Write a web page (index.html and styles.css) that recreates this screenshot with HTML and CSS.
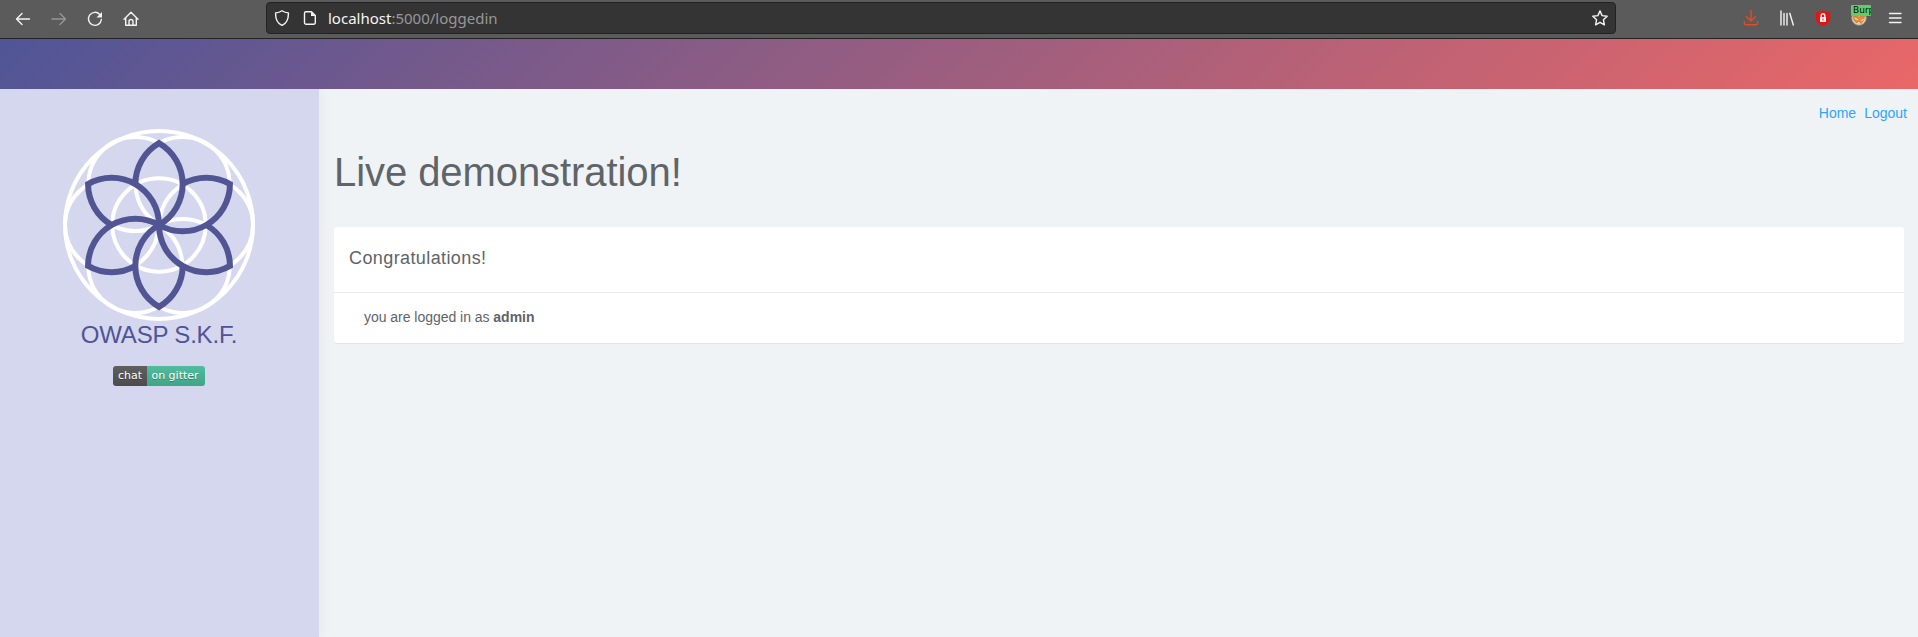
FILE: index.html
```html
<!DOCTYPE html>
<html lang="en">
<head>
<meta charset="utf-8">
<title>OWASP S.K.F.</title>
<link rel="stylesheet" href="styles.css">
</head>
<body>
<div class="toolbar">
  <div class="nav">
    <svg class="ico" viewBox="0 0 16 16"><path d="M14.500 8H1.500M7 2.500L1.500 8 7 13.500"/></svg>
    <svg class="ico off" viewBox="0 0 16 16"><path d="M1 8h13.500M9 2.500L14.500 8 9 13.500"/></svg>
    <svg class="ico" viewBox="0 0 16 16"><path d="M12.800 3.500A6.500 6.500 0 1 0 14.400 8.500"/><path class="solid" d="M15 1v5.500H9.500z"/></svg>
    <svg class="ico" viewBox="0 0 16 16"><path d="M1 8.200L8 1.300l7 6.900M2.700 7v7.300h10.600V7M6 14v-3.500a2 2 0 0 1 4 0V14"/></svg>
  </div>
  <div class="url">
    <svg class="ico" viewBox="0 0 16 16"><path d="M8 .8c2 1.400 4.200 2 6.400 2.100C14.600 9 12.500 13.500 8 15.400 3.500 13.500 1.400 9 1.600 2.900 3.800 2.800 6 2.200 8 .8z"/></svg>
    <svg class="ico page" viewBox="0 0 16 16"><path d="M4 1.700h5.500L13.300 5.500v7.300a1.500 1.500 0 0 1-1.500 1.500H4a1.500 1.500 0 0 1-1.500-1.500V3.200A1.500 1.500 0 0 1 4 1.700z"/><path class="solid" d="M9 1.700v4.300h4.500z"/></svg>
    <div class="address">localhost<span>:5000/loggedin</span></div>
    <svg class="ico" viewBox="0 0 16 16"><path d="M8 .9l2.100 4.700 5.100.6-3.800 3.500 1 5.100L8 12.300l-4.400 2.500 1-5.100L.8 6.200l5.100-.6z"/></svg>
  </div>
  <div class="tools">
    <svg class="ico down" viewBox="0 0 16 16"><path d="M8 .5v10.500M3.500 6.700L8 11l4.500-4.300M1.300 11.500v1.300a1.900 1.900 0 0 0 1.900 1.900h9.600a1.900 1.900 0 0 0 1.900-1.900v-1.300"/></svg>
    <svg class="ico" viewBox="0 0 16 16"><path d="M2 1v14M5 3.500V15M8 3.500V15M10.800 3.300L14.300 15"/></svg>
    <svg class="ico" viewBox="0 0 16 16"><path class="red" d="M8 0c2 1.400 4.500 2.100 7.200 2.200v6c0 3.700-3 6.300-7.200 7.800C3.800 14.500.8 11.900.8 8.200v-6C3.500 2.100 6 1.400 8 0z"/><path class="solid" d="M5 7h6v5H5z"/><path d="M6.200 7V5.500a1.800 1.800 0 0 1 3.600 0V7"/><path class="red" d="M7.500 8.500h1v2h-1z"/></svg>
    <div class="proxy">
      <svg class="ico" viewBox="0 0 16 16"><circle class="rim" cx="8" cy="8" r="7.300"/><path class="fox" d="M2.500 5.500L8 7l5.500-1.500-.8 4.500L10 13.500 8 11l-2.500 2L3 10z"/><path class="tail" d="M4 8.500l2.500 1M12.500 9l-2 2"/></svg>
      <span class="tag">Burp</span>
    </div>
    <svg class="ico" viewBox="0 0 16 16"><path d="M2.500 3.500h11.500M2.500 8h11.500M2.500 12.500h11.500"/></svg>
  </div>
</div>
<div class="banner"></div>
<div class="layout">
  <aside class="sidebar">
    <svg class="logo" viewBox="-96 -96 192 192">
      <defs><path id="petal" d="M0 0A47.300 47.300 0 0 0 0 -81.930A47.300 47.300 0 0 0 -23.650 -40.960"/></defs>
      <g class="rings">
        <circle r="94"/><circle r="46.700"/>
        <circle cx="47.300" r="46.700"/><circle cx="-47.300" r="46.700"/>
        <circle cx="23.650" cy="-40.960" r="47"/><circle cx="-23.650" cy="-40.960" r="47"/>
        <circle cx="23.650" cy="40.960" r="47"/><circle cx="-23.650" cy="40.960" r="47"/>
      </g>
      <g class="petals">
        <use href="#petal"/><use href="#petal" transform="rotate(60)"/><use href="#petal" transform="rotate(120)"/>
        <use href="#petal" transform="rotate(180)"/><use href="#petal" transform="rotate(240)"/><use href="#petal" transform="rotate(300)"/>
      </g>
    </svg>
    <div class="brand">OWASP S.K.F.</div>
    <div class="badge"><span class="chat">chat</span><span class="gitter">on gitter</span></div>
  </aside>
  <main class="main">
    <nav class="links"><a>Home</a><a>Logout</a></nav>
    <h1>Live demonstration!</h1>
    <section class="card">
      <h2>Congratulations!</h2>
      <p>you are logged in as <b>admin</b></p>
    </section>
  </main>
</div>
</body>
</html>
```
FILE: styles.css
```css
* { box-sizing: border-box; }
body { margin: 0; height: 637px; overflow: hidden; display: flex; flex-direction: column; background: #eff3f6; color: #5f6468; font: 14px/20px "Liberation Sans", Arial, sans-serif; }
.toolbar { height: 39px; flex: none; display: flex; align-items: flex-start; background: #5b5b5b; border-bottom: 1px solid #232323; }
.ico { display: block; width: 16px; height: 16px; flex: none; fill: none; stroke: #f4f4f4; stroke-width: 1.4; stroke-linecap: round; stroke-linejoin: round; }
.ico .solid { fill: #f4f4f4; stroke: none; }
.off { stroke: #969696; }
.nav { width: 266px; display: flex; gap: 20px; padding: 11px 0 0 15px; }
.url { width: 1350px; height: 32px; margin-top: 2px; padding: 0 7px; display: flex; align-items: center; background: #343434; border: 1px solid #222; border-radius: 4px; }
.page { margin-left: 12px; }
.address { flex: 1; margin-left: 10px; color: #f5f5f5; font: 15px/30px "Noto Sans", sans-serif; letter-spacing: 0; }
.address span { color: #989898; }
.tools { flex: 1; display: flex; justify-content: space-between; padding: 10px 15px 0 127px; }
.down { stroke: #e24c22; }
.ico .red { fill: #e51414; stroke: none; }
.proxy { position: relative; }
.rim { fill: #d9d4c8; stroke: #a28c70; stroke-width: .8; }
.fox { fill: #ed8d2b; stroke: #b8651b; stroke-width: .6; }
.tail { stroke: #fff0d8; stroke-width: 1; }
.tag { position: absolute; left: 0; top: -5px; width: 20px; height: 11px; overflow: hidden; padding-left: 2px; border-radius: 1px; background: #5fce68; color: #101010; font: 9px/11px "DejaVu Sans", sans-serif; }
.banner { height: 50px; flex: none; background: linear-gradient(135deg, #505597, #e96767); }
.layout { flex: 1; display: flex; }
.sidebar { width: 319px; flex: none; display: flex; flex-direction: column; align-items: center; padding: 40px 1px 0 0; background: #d5d7ee; box-shadow: 0 0 14px rgba(0, 0, 0, .06); clip-path: inset(0 -20px 0 0); }
.logo { width: 192px; height: 192px; display: block; }
.rings { fill: none; stroke: #fff; stroke-width: 4; }
.petals { fill: none; stroke: #515594; stroke-width: 6; stroke-linejoin: miter; }
.brand { color: #4f5496; font-size: 24px; line-height: 28px; letter-spacing: -.2px; white-space: nowrap; }
.badge { margin-top: 17px; display: flex; height: 20px; border-radius: 3px; overflow: hidden; color: #fff; font: 11px/20px "DejaVu Sans", sans-serif; text-shadow: 0 1px 0 rgba(1, 1, 1, .3); }
.badge span { text-align: center; }
.chat { width: 34px; background: linear-gradient(#5f5f5f, #4c4c4c); }
.gitter { width: 58px; padding-right: 2px; background: linear-gradient(#52bb9e, #3fa587); }
.main { flex: 1; padding: 14px 14px 0 15px; }
.links { display: flex; justify-content: flex-end; gap: 8px; margin-right: -3px; color: #2da5ff; }
h1 { margin: 23px 0 0; font-size: 40px; line-height: 52px; font-weight: 400; letter-spacing: -.07px; }
.card { margin-top: 29px; height: 116px; background: #fff; border-radius: 3px; box-shadow: 0 1px 1px rgba(0, 0, 0, .06); }
h2 { margin: 0; height: 66px; padding: 20px 15px 0; font-size: 18px; line-height: 22px; font-weight: 400; letter-spacing: .4px; border-bottom: 1px solid #e9ebec; }
p { margin: 0; padding: 14px 30px 0; letter-spacing: -.03px; }
```
